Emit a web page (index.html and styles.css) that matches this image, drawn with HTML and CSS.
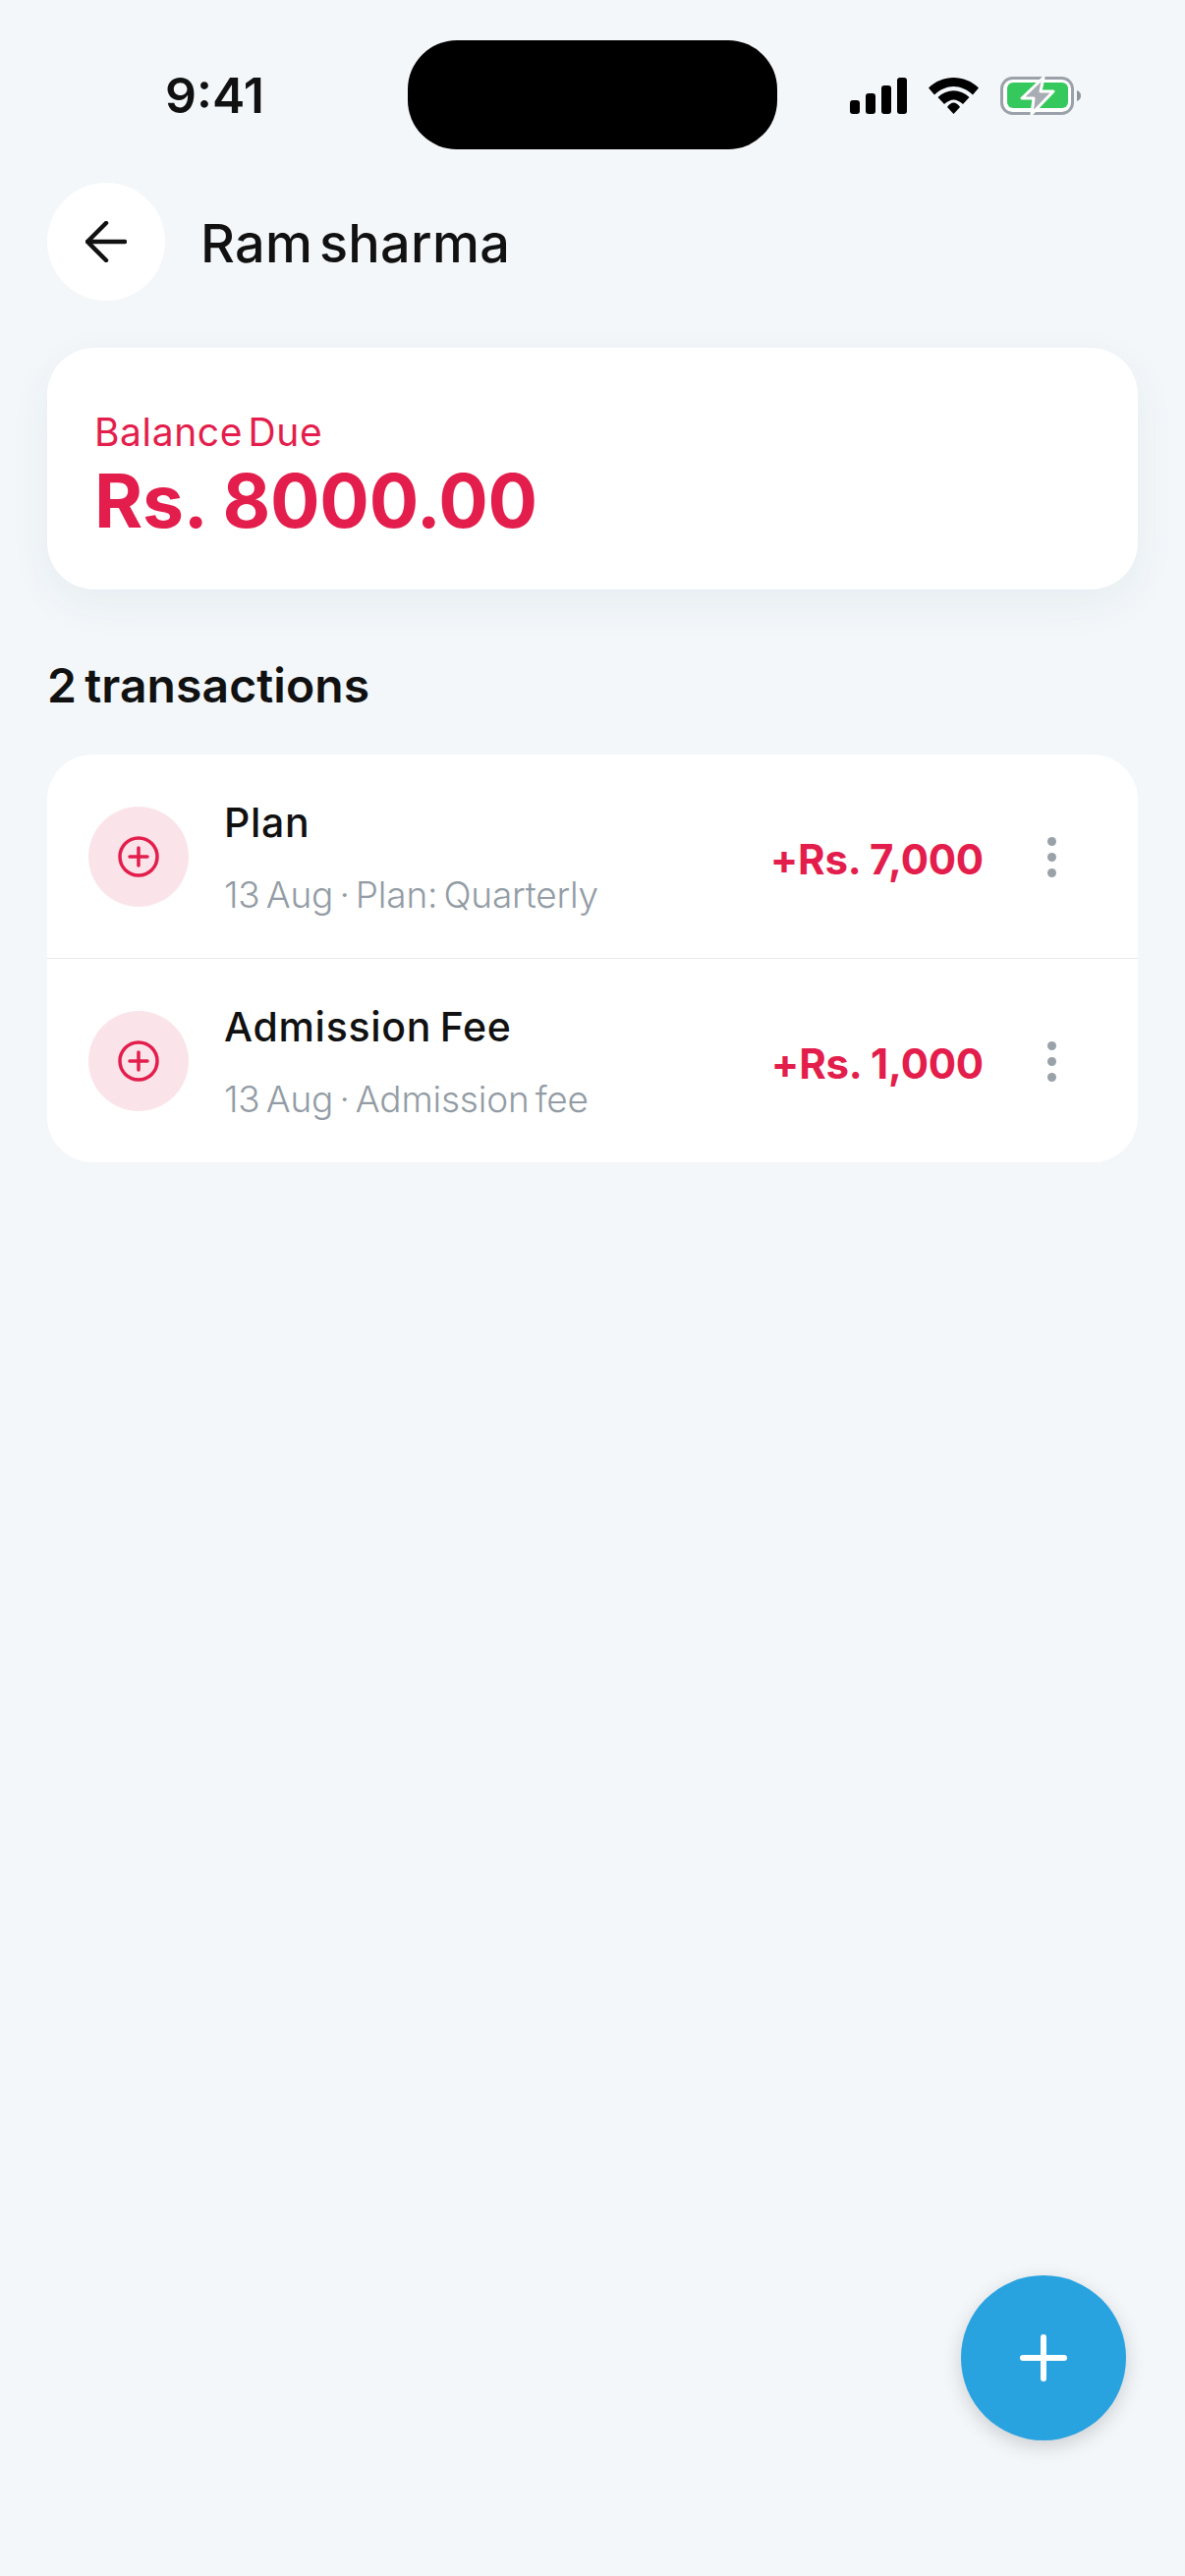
FILE: index.html
```html
<!DOCTYPE html>
<html lang="en">
<head>
<meta charset="utf-8">
<title>Ram sharma</title>
<link rel="stylesheet" href="styles.css">
</head>
<body>
<div class="screen">
  <header class="status">
    <span class="time">9:41</span>
    <span class="island"></span>
    <span class="status-icons">
      <svg class="signal" width="58" height="37" viewBox="0 0 58 37"><rect x="0" y="23" width="10" height="14" rx="3"/><rect x="16" y="16" width="10" height="21" rx="3"/><rect x="32" y="8" width="10" height="29" rx="3"/><rect x="48" y="0" width="10" height="37" rx="3"/></svg>
      <svg class="wifi" width="51" height="37" viewBox="0 0 51 37"><path d="M0 10.5C14-3.5 37-3.5 51 10.5L45 17.5C33 6 18 6 6 17.5Z"/><path d="M9.5 20C19 11 32 11 41.5 20L35 27C28 21 23 21 16 27Z"/><path d="M19 30C23 24 28 24 32 30L25.5 37Z"/></svg>
      <svg class="battery" width="82" height="41" viewBox="0 0 82 41"><rect x="1.5" y="2.5" width="72" height="36" rx="11" fill="#fff" stroke="#9aa1a8" stroke-width="3"/><rect x="7" y="7" width="62" height="26" rx="6" fill="#35c95d"/><path d="M78 15C81 16 82 18 82 20.500C82 23 81 25 78 26Z" fill="#8d949b"/><path d="M44 2L22 23H34L32 39L54 16H41Z" fill="#a8adb3" stroke="#fff" stroke-width="3" stroke-linejoin="round"/></svg>
    </span>
  </header>

  <div class="title-bar">
    <button class="back" type="button" aria-label="Back">
      <svg width="42" height="42" viewBox="0 0 42 42" fill="none" stroke="#111" stroke-width="4.500" stroke-linecap="round" stroke-linejoin="round"><path d="M40 21H2M21 2L2 21L21 40"/></svg>
    </button>
    <h1 class="title">Ram sharma</h1>
  </div>

  <section class="balance">
    <div class="balance-label">Balance Due</div>
    <div class="balance-value">Rs. 8000.00</div>
  </section>

  <h2 class="count">2 transactions</h2>

  <section class="list">
    <article class="row">
      <span class="row-icon"><svg width="42" height="42" viewBox="0 0 42 42" fill="none" stroke="#e31e4c" stroke-width="3.500" stroke-linecap="round"><circle cx="21" cy="21" r="19"/><path d="M21 12V30M12 21H30"/></svg></span>
      <div class="row-text">
        <div class="row-name">Plan</div>
        <div class="row-sub">13 Aug · Plan: Quarterly</div>
      </div>
      <div class="row-amount">+Rs. 7,000</div>
      <span class="dots"><i></i><i></i><i></i></span>
    </article>
    <article class="row">
      <span class="row-icon"><svg width="42" height="42" viewBox="0 0 42 42" fill="none" stroke="#e31e4c" stroke-width="3.500" stroke-linecap="round"><circle cx="21" cy="21" r="19"/><path d="M21 12V30M12 21H30"/></svg></span>
      <div class="row-text">
        <div class="row-name">Admission Fee</div>
        <div class="row-sub">13 Aug · Admission fee</div>
      </div>
      <div class="row-amount">+Rs. 1,000</div>
      <span class="dots"><i></i><i></i><i></i></span>
    </article>
  </section>

  <button class="fab" type="button" aria-label="Add">
    <svg width="48" height="48" viewBox="0 0 48 48" stroke="#fff" stroke-width="6" stroke-linecap="round"><path d="M24 3V45M3 24H45"/></svg>
  </button>
</div>
</body>
</html>
```

FILE: styles.css
```css
* { box-sizing: border-box; }
html, body { margin: 0; padding: 0; }
body { background: #f3f7fa; font-family: Inter, "Liberation Sans", sans-serif; color: #111; }
.screen { position: relative; width: 1206px; height: 2622px; overflow: hidden; padding: 0 48px; }

.status { display: flex; align-items: center; height: 186px; padding: 41px 0 34px 120px; }
.time { width: 247px; padding-top: 2px; font-size: 50px; font-weight: 600; line-height: 111px; }
.island { width: 376px; height: 111px; border-radius: 50px; background: #000; }
.status-icons { display: flex; align-items: center; margin: 2px 0 0 74px; }
.signal, .wifi, .battery { display: block; }
.wifi { margin-left: 22px; }
.battery { margin-left: 22px; }

.title-bar { display: flex; align-items: center; height: 120px; }
.back { display: flex; align-items: center; justify-content: center; width: 120px; height: 120px; padding: 0; border: 0; border-radius: 50%; background: #fff; }
.title { margin: 4px 0 0 36px; font-size: 54px; font-weight: 500; line-height: 64px; letter-spacing: 0.3px; word-spacing: -8px; }

.balance { height: 246px; margin-top: 48px; padding: 62px 48px 0; border-radius: 48px; background: #fff; box-shadow: 0 14px 44px rgba(40, 60, 80, 0.06); color: #e31e4c; }
.balance-label { font-size: 39px; font-weight: 400; line-height: 48px; letter-spacing: 0.6px; word-spacing: -6px; }
.balance-value { margin-top: 3px; font-size: 75px; font-weight: 700; line-height: 86px; letter-spacing: -0.3px; }

.count { margin: 69px 0 0; font-size: 48px; font-weight: 600; line-height: 58px; letter-spacing: 0.1px; word-spacing: -4px; }

.list { margin-top: 41px; border-radius: 46px; background: #fff; overflow: hidden; }
.row { display: flex; align-items: center; height: 207px; padding-left: 42px; }
.row + .row { height: 208px; border-top: 1.500px solid #e6e8ea; }
.row-icon { display: flex; align-items: center; justify-content: center; width: 102px; height: 102px; border-radius: 50%; background: #fae4ea; flex: none; }
.row-text { flex: 1; margin-left: 36px; padding-top: 2px; }
.row-name { font-size: 41px; font-weight: 500; line-height: 50px; letter-spacing: 0.7px; word-spacing: -3px; }
.row-sub { margin-top: 26px; font-size: 37px; font-weight: 300; line-height: 46px; color: #939ca5; letter-spacing: -0.2px; word-spacing: -4px; }
.row-amount { padding-top: 6px; font-size: 42px; font-weight: 700; line-height: 52px; color: #e31e4c; letter-spacing: -0.2px; }
.dots { display: flex; flex-direction: column; gap: 7px; margin: 0 83px 0 65px; padding-top: 2px; }
.dots i { display: block; width: 9px; height: 9px; border-radius: 50%; background: #99a1a9; }

.fab { position: absolute; left: 978px; top: 2316px; display: flex; align-items: center; justify-content: center; width: 168px; height: 168px; padding: 0; border: 0; border-radius: 50%; background: #29a2e0; box-shadow: 0 6px 20px rgba(0, 0, 0, 0.16); }
```
